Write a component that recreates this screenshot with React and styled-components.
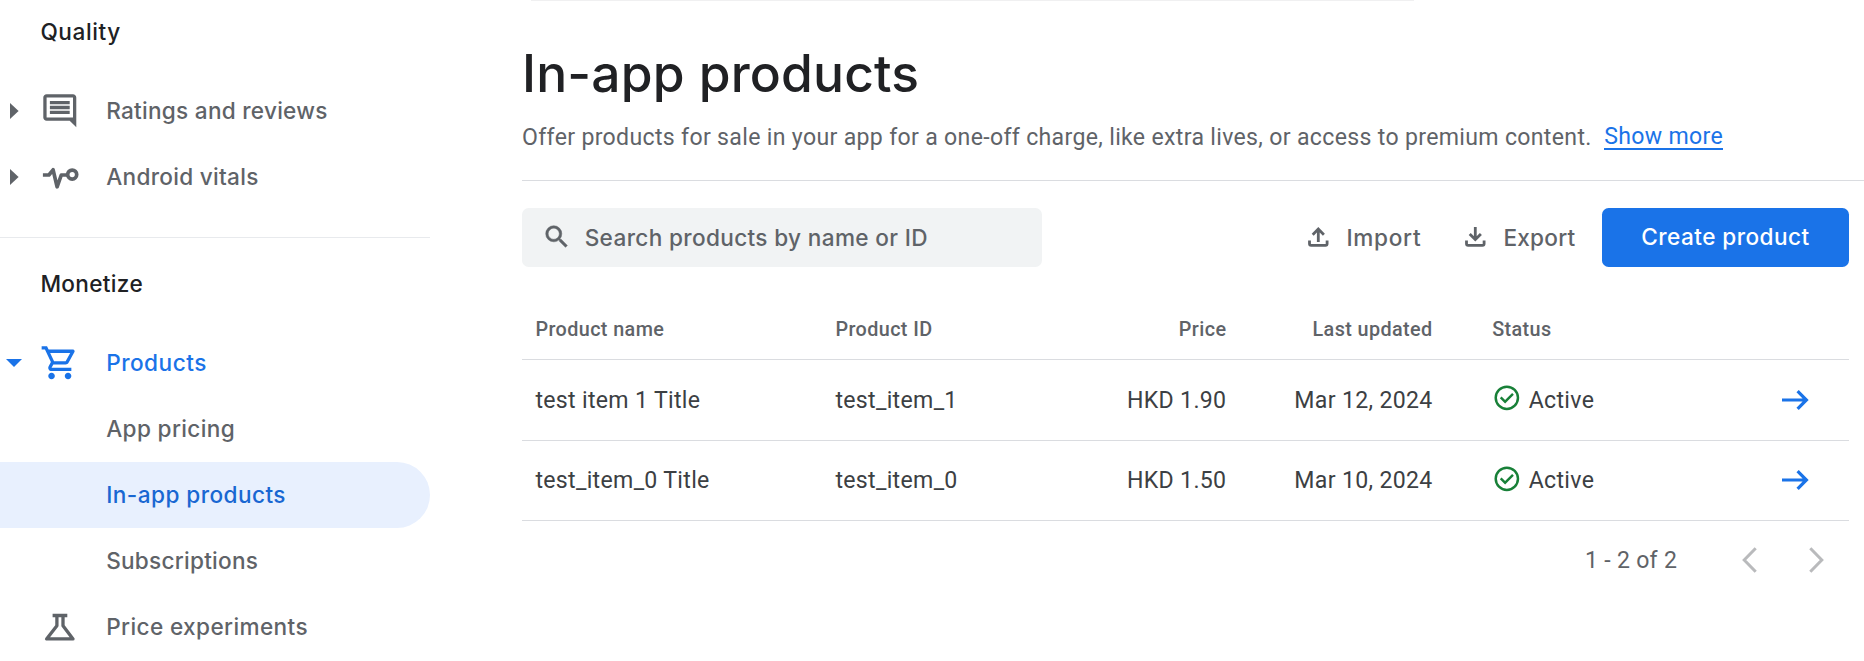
import React from 'react';
import styled, { createGlobalStyle } from 'styled-components';

const GlobalStyle = createGlobalStyle`
  *, *::before, *::after { box-sizing: border-box; }
  body { margin: 0; background: #fff; }
`;

const display = `"Inter", "Roboto", sans-serif`;
const body = `"Roboto", "Liberation Sans", sans-serif`;

const Page = styled.div`
  display: flex;
  height: 661px;
  overflow: hidden;
  background: #fff;
  font-family: ${body};
  color: #5f6368;
`;

/* Sidebar */
const Sidebar = styled.nav`
  width: 430px;
  flex: none;
  font-family: ${display};
  font-size: 22.6px;
  font-weight: 500;
`;

const Section = styled.section`
  padding-bottom: 27px;
  & + & { border-top: 1px solid #e8eaed; padding-bottom: 0; }
`;

const SectionTitle = styled.h2`
  margin: 0;
  padding: 0 0 ${p => p.$bottom}px 40.4px;
  height: ${p => p.$height}px;
  display: flex;
  align-items: center;
  color: #202124;
  font-size: inherit;
  font-weight: 500;
  letter-spacing: ${p => p.$spacing}px;
`;

const NavItem = styled.a`
  display: flex;
  align-items: center;
  height: 66px;
  border-radius: 0 33px 33px 0;
  color: ${p => (p.$active ? '#1967d2' : p.$open ? '#1a73e8' : '#5f6368')};
  background: ${p => (p.$active ? '#e8f0fe' : 'transparent')};
`;

const Toggle = styled.span`
  width: 40.2px;
  padding-left: ${p => (p.$open ? 6 : 10.4)}px;
  display: flex;
  flex: none;
`;

const NavIcon = styled.span`
  width: 66px;
  height: 40px;
  display: flex;
  flex: none;
`;

const NavLabel = styled.span`
  padding-bottom: 2px;
  white-space: nowrap;
  letter-spacing: ${p => p.$spacing}px;
`;

/* Main column */
const Main = styled.main`
  flex: 1;
  min-width: 0;
  padding-left: 92px;
`;

const CardEdge = styled.div`
  height: 1px;
  width: 883px;
  margin-left: 9px;
  background: #f0f0f1;
`;

const Header = styled.header`
  height: 180px;
  border-bottom: 1px solid #dadce0;
  padding-top: 40px;
`;

const Title = styled.h1`
  margin: 0;
  height: 64px;
  line-height: 64px;
  font-family: ${display};
  font-size: 51.5px;
  font-weight: 500;
  letter-spacing: 0.17px;
  color: #202124;
`;

const Description = styled.p`
  margin: 16px 0 0;
  line-height: 33px;
  font-size: 23.1px;
  letter-spacing: 0.32px;
  white-space: nowrap;
`;

const ShowMore = styled.a`
  display: inline-block;
  vertical-align: 1px;
  height: 27px;
  margin-left: 12.6px;
  line-height: 27px;
  letter-spacing: 0.3px;
  color: #1a73e8;
  border-bottom: 2px solid #1a73e8;
`;

const Content = styled.div`
  width: 1327px;
  padding-top: 27px;
`;

const Toolbar = styled.div`
  display: flex;
  align-items: center;
  height: 59px;
  font-family: ${display};
  font-size: 22.6px;
  font-weight: 500;
`;

const SearchBox = styled.div`
  display: flex;
  align-items: center;
  width: 520px;
  height: 59px;
  margin-right: auto;
  padding: 0 0 0 20px;
  border-radius: 6.6px;
  background: #f1f3f4;
  letter-spacing: 0.34px;
  svg { margin: 0 13px 2px 0; }
`;

const TextButton = styled.button`
  display: flex;
  align-items: center;
  gap: ${p => p.$gap}px;
  width: ${p => p.$width}px;
  padding: 0 0 1px;
  border: 0;
  background: none;
  color: inherit;
  font: inherit;
  letter-spacing: ${p => p.$spacing}px;
`;

const PrimaryButton = styled.button`
  width: 247px;
  height: 59px;
  padding-bottom: 3px;
  border: 0;
  border-radius: 6.6px;
  background: #1a73e8;
  color: #fff;
  font: inherit;
  letter-spacing: 0.44px;
`;

const Table = styled.div`
  margin-top: 32px;
`;

const Row = styled.div`
  display: grid;
  grid-template-columns: 299px 419px 206px 1fr 47px;
  align-items: center;
  height: ${p => p.$height}px;
  border-bottom: 1px solid #dadce0;
  font-size: ${p => (p.$head ? 19.8 : 23.1)}px;
  font-weight: ${p => (p.$head ? 500 : 400)};
  letter-spacing: ${p => (p.$head ? 0.4 : 0.32)}px;
  color: ${p => (p.$head ? '#5f6368' : '#3c4043')};
`;

const IdPriceCell = styled.div`
  display: flex;
  justify-content: space-between;
  padding: 0 13.6px 0 14.4px;
`;

const Cell = styled.div`
  padding: 0 13.4px;
  text-align: ${p => (p.$right ? 'right' : 'left')};
  white-space: nowrap;
`;

const StatusCell = styled.div`
  display: flex;
  align-items: center;
  gap: 6.8px;
  padding-left: 46.2px;
  svg { margin-bottom: 4px; }
`;

const OpenCell = styled.div`
  display: flex;
  margin: 0 0 1px -20px;
`;

const Pagination = styled.div`
  display: flex;
  align-items: center;
  justify-content: flex-end;
  height: 78px;
  padding-right: 24.8px;
  font-size: 23.1px;
  letter-spacing: 0.28px;
`;

const PageArrows = styled.div`
  display: flex;
  gap: 52px;
  margin-left: 65px;
  color: #b9babc;
`;

/* Icons */
const RightCaret = () => <svg width="9" height="16" viewBox="0 0 9 16" fill="currentColor"><path d="M0 0l8.6 8L0 16z" /></svg>;
const DownCaret = () => <svg width="16" height="8" viewBox="0 0 16 8" fill="currentColor"><path d="M0 0h16L8 8z" /></svg>;

const CommentIcon = () => (
  <svg width="39.6" height="39.6" viewBox="0 0 24 24" fill="currentColor">
    <path d="M21.99 4c0-1.1-.89-2-1.99-2H4c-1.1 0-2 .9-2 2v12c0 1.1.9 2 2 2h14l4 4-.01-18zM20 4v12H4V4h16zM6 12h12v2H6zm0-3h12v2H6zm0-3h12v2H6z" />
  </svg>
);

const VitalsIcon = () => (
  <svg width="40" height="40" viewBox="0 0 40 40" fill="none" stroke="currentColor" strokeWidth="3.7" strokeLinejoin="round">
    <path d="M2.9 18h6l4.2-5.2 4 17 4.2-11.8h6" />
    <circle cx="32.2" cy="17.6" r="4.5" />
  </svg>
);

const CartIcon = () => (
  <svg width="39.6" height="39.6" viewBox="0 0 24 24" fill="currentColor">
    <path d="M15.55 13c.75 0 1.41-.41 1.75-1.03l3.58-6.49A.996.996 0 0 0 20.01 4H5.21l-.94-2H1v2h2l3.6 7.59-1.35 2.44C4.52 15.37 5.48 17 7 17h12v-2H7l1.1-2h7.45zM6.16 6h12.15l-2.76 5H8.53L6.16 6zM7 18c-1.1 0-1.99.9-1.99 2S5.9 22 7 22s2-.9 2-2-.9-2-2-2zm10 0c-1.1 0-1.99.9-1.99 2s.89 2 1.99 2 2-.9 2-2-.9-2-2-2z" />
  </svg>
);

const FlaskIcon = () => (
  <svg width="40" height="40" viewBox="0 0 40 40" fill="none" stroke="currentColor" strokeWidth="3.3" strokeLinejoin="round">
    <path d="M12.6 8.5h14.7M16.9 9v9.7L6.6 31.9H33L23 18.7V9" />
  </svg>
);

const SearchIcon = () => (
  <svg width="29.7" height="29.7" viewBox="0 0 24 24" fill="currentColor" stroke="currentColor" strokeWidth="0.4">
    <path d="M15.5 14h-.79l-.28-.27A6.471 6.471 0 0 0 16 9.5 6.5 6.5 0 1 0 9.5 16c1.61 0 3.09-.59 4.23-1.57l.27.28v.79l5 4.99L20.49 19l-4.99-5zm-6 0C7.01 14 5 11.99 5 9.5S7.01 5 9.5 5 14 7.01 14 9.5 11.99 14 9.5 14z" />
  </svg>
);

const TrayIcon = ({ up }) => (
  <svg width="21" height="20" viewBox="0 0 21 20" fill="none" stroke="currentColor" strokeWidth="2.8">
    <path d="M1.5 13.6v3.2q0 1.6 1.6 1.6h14.4q1.6 0 1.6-1.6v-3.2" />
    <path d={up ? 'M10.3 15V2.2M4.7 7.7l5.6-5.6 5.6 5.6' : 'M10.3 0v12.4M4.7 6.9l5.6 5.6 5.6-5.6'} />
  </svg>
);

const ActiveIcon = () => (
  <svg width="29.7" height="29.7" viewBox="0 0 24 24" fill="#188038">
    <path d="m10.6 16.6 7.05-7.05-1.4-1.4-5.65 5.65-2.85-2.85-1.4 1.4zM12 2a10 10 0 1 0 0 20 10 10 0 0 0 0-20zm0 2a8 8 0 1 1 0 16 8 8 0 0 1 0-16z" />
  </svg>
);

const ArrowIcon = () => (
  <svg width="27" height="20" viewBox="0 0 27 20" fill="none" stroke="#1a73e8" strokeWidth="3.2">
    <path d="M0 10h24.5M15.6 1.2l8.8 8.8-8.8 8.8" />
  </svg>
);

const Chevron = ({ left }) => (
  <svg width="15" height="26" viewBox="0 0 15 26" fill="none" stroke="currentColor" strokeWidth="3">
    <path d={left ? 'M13.7 1.2L2.2 13l11.5 11.8' : 'M1.3 1.2L12.8 13 1.3 24.8'} />
  </svg>
);

const products = [
  { name: 'test item 1 Title', id: 'test_item_1', price: 'HKD 1.90', updated: 'Mar 12, 2024' },
  { name: 'test_item_0 Title', id: 'test_item_0', price: 'HKD 1.50', updated: 'Mar 10, 2024' },
];

function Item({ label, icon, toggle, active, open, spacing }) {
  return (
    <NavItem $active={active} $open={open}>
      <Toggle $open={open}>{toggle}</Toggle>
      <NavIcon>{icon}</NavIcon>
      <NavLabel $spacing={spacing}>{label}</NavLabel>
    </NavItem>
  );
}

export default function App() {
  return (
    <Page>
      <GlobalStyle />
      <Sidebar>
        <Section>
          <SectionTitle $height={78} $bottom={16} $spacing={0.6}>Quality</SectionTitle>
          <Item label="Ratings and reviews" icon={<CommentIcon />} toggle={<RightCaret />} spacing={0.26} />
          <Item label="Android vitals" icon={<VitalsIcon />} toggle={<RightCaret />} spacing={0.29} />
        </Section>
        <Section>
          <SectionTitle $height={92} $bottom={2} $spacing={0.32}>Monetize</SectionTitle>
          <Item label="Products" icon={<CartIcon />} toggle={<DownCaret />} open spacing={0.49} />
          <Item label="App pricing" spacing={0.36} />
          <Item label="In-app products" active spacing={0.44} />
          <Item label="Subscriptions" spacing={0.24} />
          <Item label="Price experiments" icon={<FlaskIcon />} spacing={0.37} />
        </Section>
      </Sidebar>
      <Main>
        <CardEdge />
        <Header>
          <Title>In-app products</Title>
          <Description>
            Offer products for sale in your app for a one-off charge, like extra lives, or access to premium content.
            <ShowMore>Show more</ShowMore>
          </Description>
        </Header>
        <Content>
          <Toolbar>
            <SearchBox><SearchIcon />Search products by name or ID</SearchBox>
            <TextButton $gap={17.4} $width={157} $spacing={0.72}><TrayIcon up />Import</TextButton>
            <TextButton $gap={17.4} $width={137} $spacing={0.24}><TrayIcon />Export</TextButton>
            <PrimaryButton>Create product</PrimaryButton>
          </Toolbar>
          <Table>
            <Row $head $height={61}>
              <Cell>Product name</Cell>
              <IdPriceCell><span>Product ID</span><span>Price</span></IdPriceCell>
              <Cell $right>Last updated</Cell>
              <StatusCell>Status</StatusCell>
            </Row>
            {products.map((p, i) => (
              <Row key={p.id} $height={i === 0 ? 81 : 80}>
                <Cell>{p.name}</Cell>
                <IdPriceCell><span>{p.id}</span><span>{p.price}</span></IdPriceCell>
                <Cell $right>{p.updated}</Cell>
                <StatusCell><ActiveIcon />Active</StatusCell>
                <OpenCell><ArrowIcon /></OpenCell>
              </Row>
            ))}
          </Table>
          <Pagination>
            1 - 2 of 2
            <PageArrows><Chevron left /><Chevron /></PageArrows>
          </Pagination>
        </Content>
      </Main>
    </Page>
  );
}
